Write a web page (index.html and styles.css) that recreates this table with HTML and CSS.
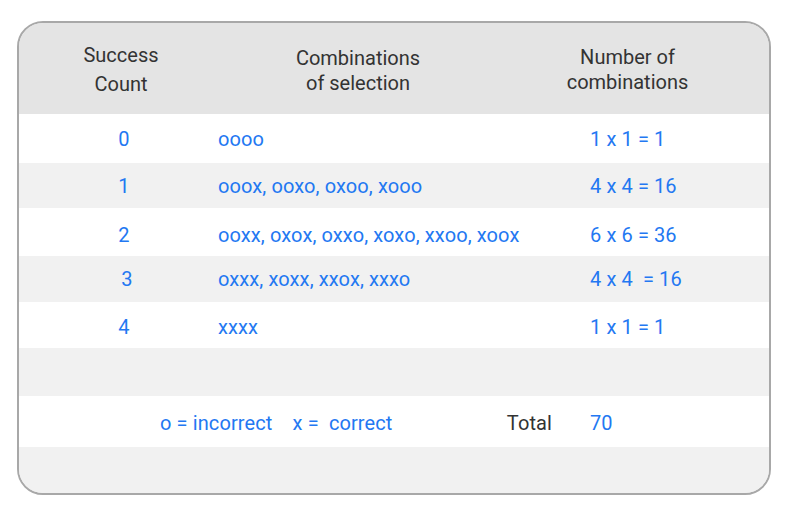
FILE: index.html
```html
<!DOCTYPE html>
<html>
<head>
<meta charset="utf-8">
<link rel="stylesheet" href="styles.css">
</head>
<body>
<div class="frame">
  <div class="head">
    <div class="hcell h1">Success<br>Count</div>
    <div class="hcell h2">Combinations<br>of selection</div>
    <div class="hcell h3">Number of<br>combinations</div>
  </div>
  <div class="row white">
    <div class="c1">0</div>
    <div class="c2">oooo</div>
    <div class="c3">1 x 1 = 1</div>
  </div>
  <div class="row grey">
    <div class="c1">1</div>
    <div class="c2">ooox, ooxo, oxoo, xooo</div>
    <div class="c3">4 x 4 = 16</div>
  </div>
  <div class="row white r2">
    <div class="c1">2</div>
    <div class="c2">ooxx, oxox, oxxo, xoxo, xxoo, xoox</div>
    <div class="c3">6 x 6 = 36</div>
  </div>
  <div class="row grey">
    <div class="c1 shift">3</div>
    <div class="c2">oxxx, xoxx, xxox, xxxo</div>
    <div class="c3">4 x 4  = 16</div>
  </div>
  <div class="row white r4">
    <div class="c1">4</div>
    <div class="c2">xxxx</div>
    <div class="c3">1 x 1 = 1</div>
  </div>
  <div class="row grey"></div>
  <div class="row white legend-row">
    <div class="legend">
      <span class="key">o = incorrect    x =  correct</span>
      <span class="total">Total</span>
    </div>
    <div class="c3">70</div>
  </div>
  <div class="row grey"></div>
</div>
</body>
</html>
```

FILE: styles.css
```css
* { box-sizing: border-box; }
html, body { margin: 0; padding: 0; background: #ffffff; }
body {
  font-family: Roboto, "Liberation Sans", sans-serif;
  font-size: 20px;
}
.frame {
  margin: 21px 0 0 17px;
  width: 754px;
  height: 474px;
  border: 2px solid #a8a8a8;
  border-radius: 26px;
  overflow: hidden;
  background: #f1f1f1;
  display: grid;
  grid-template-rows: 91px 49px 45px 48px 46px 46px 48px 51px 1fr;
}
.head {
  background: #e4e4e4;
  display: grid;
  grid-template-columns: 204px 271px 1fr;
  align-items: center;
  color: #333333;
  text-align: center;
}
.hcell { line-height: 25px; }
.h1 { line-height: 29px; padding-top: 3px; }
.h2 { padding-top: 4px; padding-right: 1px; }
.h3 { padding-top: 3px; padding-right: 8px; }
.row {
  display: grid;
  grid-template-columns: 199px 372px 1fr;
  align-items: center;
  color: #2378f2;
  line-height: 24px;
  letter-spacing: 0.1px;
}
.white { background: #ffffff; }
.grey { background: #f1f1f1; }
.c1 { text-align: center; padding-left: 11px; }
.c1.shift { padding-left: 17px; }
.r2 > div { padding-top: 5px; }
.r4 > div { padding-top: 3px; }
.legend {
  grid-column: 1 / 3;
  display: flex;
  align-items: center;
  padding-left: 141px;
  padding-right: 38px;
  padding-top: 3px;
}
.legend-row > .c3 { padding-top: 3px; }
.key { white-space: pre; }
.c3 { white-space: pre; }
.total { margin-left: auto; color: #333333; }
```
